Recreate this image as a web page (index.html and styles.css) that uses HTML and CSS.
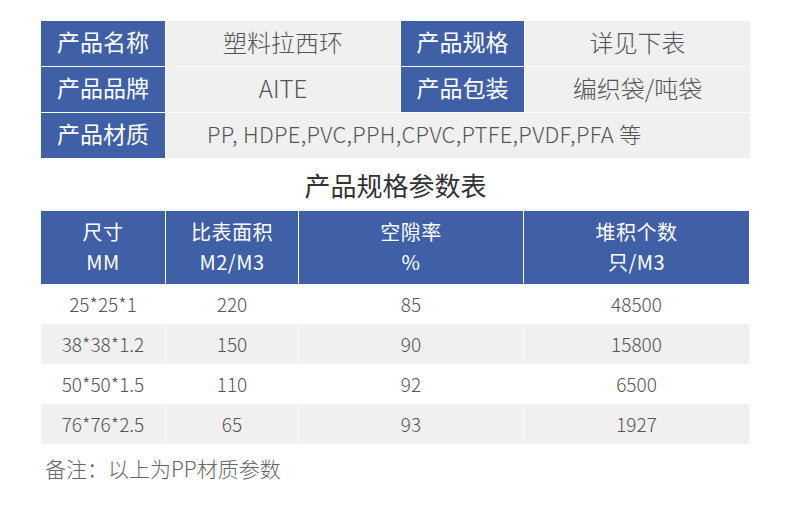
FILE: index.html
```html
<!DOCTYPE html>
<html lang="zh-CN">
<head>
<meta charset="utf-8">
<title>塑料拉西环</title>
<link rel="stylesheet" href="styles.css">
</head>
<body>
<div class="page">
  <div class="info">
    <div class="lab">产品名称</div><div class="val">塑料拉西环</div>
    <div class="lab">产品规格</div><div class="val">详见下表</div>
    <div class="lab">产品品牌</div><div class="val">AITE</div>
    <div class="lab">产品包装</div><div class="val">编织袋/吨袋</div>
    <div class="lab">产品材质</div><div class="val wide">PP, HDPE,PVC,PPH,CPVC,PTFE,PVDF,PFA 等</div>
  </div>
  <h2 class="title">产品规格参数表</h2>
  <div class="spec">
    <div class="hd">尺寸<br>MM</div>
    <div class="hd">比表面积<br>M2/M3</div>
    <div class="hd">空隙率<br>%</div>
    <div class="hd">堆积个数<br>只/M3</div>

    <div class="cell">25*25*1</div><div class="cell">220</div><div class="cell">85</div><div class="cell">48500</div>
    <div class="cell alt">38*38*1.2</div><div class="cell alt">150</div><div class="cell alt">90</div><div class="cell alt">15800</div>
    <div class="cell">50*50*1.5</div><div class="cell">110</div><div class="cell">92</div><div class="cell">6500</div>
    <div class="cell alt">76*76*2.5</div><div class="cell alt">65</div><div class="cell alt">93</div><div class="cell alt">1927</div>
  </div>
  <p class="note">备注：以上为PP材质参数</p>
</div>
</body>
</html>
```
FILE: styles.css
```css
* { box-sizing: border-box; }
html, body { margin: 0; padding: 0; background: #fff; }
body {
  font-family: "Noto Sans CJK SC", "Noto Sans", sans-serif;
  color: #555;
}
.page {
  width: 790px;
  padding: 21px 40px 0 41px;
}
.info {
  display: grid;
  grid-template-columns: 124px 234px 123px 225px;
  grid-auto-rows: 45px;
  column-gap: 1px;
  row-gap: 1px;
  width: 709px;
}
.lab {
  background: #3f5fa7;
  color: #fff;
  font-size: 23px;
  display: flex;
  align-items: center;
  justify-content: center;
  padding-bottom: 5px;
}
.val {
  background: #f0f0f0;
  color: #555;
  font-size: 24px;
  font-weight: 300;
  display: flex;
  align-items: center;
  justify-content: center;
  padding-bottom: 5px;
}
.val.wide {
  grid-column: 2 / 5;
  justify-content: flex-start;
  padding-left: 41px;
  font-size: 22px;
  letter-spacing: 0.3px;
}
.title {
  margin: 12px 0 0;
  height: 41px;
  text-align: center;
  font-size: 26px;
  font-weight: 400;
  color: #333;
  line-height: 30px;
}
.spec {
  display: grid;
  grid-template-columns: 124px 132px 224px 225px;
  grid-template-rows: 73px repeat(4, 40px);
  column-gap: 1px;
  width: 709px;
}
.hd {
  background: #3f5fa7;
  color: #fff;
  font-size: 20px;
  line-height: 30px;
  text-align: center;
  display: flex;
  flex-direction: column;
  justify-content: center;
  letter-spacing: 0.5px;
  padding-bottom: 2px;
}
.cell {
  font-size: 19px;
  font-weight: 300;
  color: #555;
  display: flex;
  align-items: center;
  justify-content: center;
  background: #fff;
  padding-bottom: 2px;
}
.cell.alt { background: #f0f0f0; }
.note {
  margin: 9px 0 0 4px;
  font-size: 21px;
  font-weight: 300;
  color: #666;
}
```
